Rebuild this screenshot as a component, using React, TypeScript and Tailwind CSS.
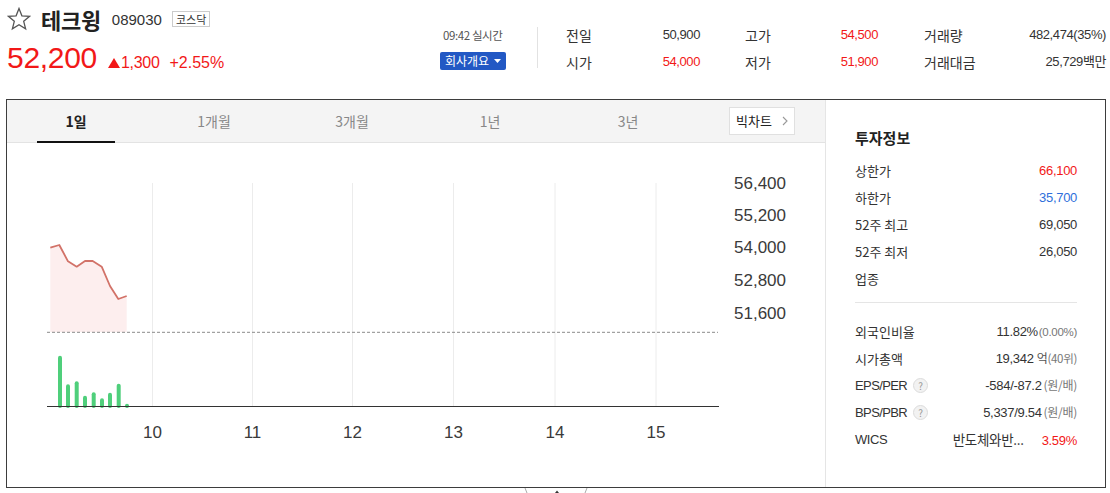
import React from "react";

const F = "font-['Liberation_Sans','Noto_Sans_CJK_KR',sans-serif]";
const K = "font-['Noto_Sans_CJK_KR','Liberation_Sans',sans-serif]";

function Star() {
  return (
    <svg width="24" height="24" viewBox="0 0 24 24">
      <polygon
        points="12,1.5 14.9,8.8 22.6,9.3 16.7,14.3 18.6,21.9 12,17.7 5.4,21.9 7.3,14.3 1.4,9.3 9.1,8.8"
        fill="none"
        stroke="#555"
        strokeWidth="1.3"
        strokeLinejoin="miter"
      />
    </svg>
  );
}

function Help() {
  return (
    <span className="ml-[6px] inline-flex h-[15px] w-[15px] items-center justify-center rounded-full border border-[#dcdcdc] bg-[#f2f2f2] text-[10px] leading-none text-[#999]">
      ?
    </span>
  );
}

function Chart() {
  const price: [number, number][] = [
    [43.3, 104.7],
    [52.3, 102],
    [61, 118.3],
    [69.7, 123.7],
    [78, 118],
    [85.7, 118],
    [94.7, 123.7],
    [103, 143],
    [111.3, 156],
    [119.7, 153],
  ];
  const line = price.map((p, i) => `${i ? "L" : "M"}${p[0]},${p[1]}`).join(" ");
  const area = `${line} L119.7,189 L43.3,189 Z`;
  const bars: [number, number][] = [
    [53, 212.7],
    [61, 241.3],
    [69.7, 238.3],
    [78, 252.7],
    [86.7, 249.3],
    [95, 255.3],
    [103, 249.7],
    [111.7, 240.7],
    [120, 260.7],
  ];
  const grid = [145.5, 245.5, 345.5, 446.5, 548, 649];
  const xl = ["10", "11", "12", "13", "14", "15"];
  const yl: [string, number][] = [
    ["56,400", 40.3],
    ["55,200", 72],
    ["54,000", 104.7],
    ["52,800", 137],
    ["51,600", 170.3],
  ];
  return (
    <svg width="818" height="344" viewBox="0 0 818 344" className="block">
      {grid.map((x) => (
        <line key={x} x1={x} y1={40} x2={x} y2={263} stroke="#ececec" strokeWidth="1" />
      ))}
      <path d={area} fill="#fdeeee" />
      <path d={line} fill="none" stroke="#d27268" strokeWidth="1.8" strokeLinejoin="round" />
      <line x1={40} y1={189.3} x2={711} y2={189.3} stroke="#8a8a8a" strokeWidth="1" strokeDasharray="3 2" />
      {bars.map(([x, t]) => (
        <rect key={x} x={x - 2} y={t} width={4} height={263 - t + 2} rx={2} fill="#4fcf7b" />
      ))}
      <line x1={40} y1={263.5} x2={712} y2={263.5} stroke="#333" strokeWidth="1.2" />
      {yl.map(([t, y]) => (
        <text
          key={t}
          x={727}
          y={y}
          dominantBaseline="central"
          fontSize="17"
          fill="#3a3a3a"
          fontFamily="'Liberation Sans', Arial, sans-serif"
        >
          {t}
        </text>
      ))}
      {grid.map((x, i) => (
        <text
          key={x}
          x={x}
          y={289.7}
          textAnchor="middle"
          dominantBaseline="central"
          fontSize="17"
          fill="#3a3a3a"
          fontFamily="'Liberation Sans', Arial, sans-serif"
        >
          {xl[i]}
        </text>
      ))}
    </svg>
  );
}

function Row({ label, children }: { label: React.ReactNode; children: React.ReactNode }) {
  return (
    <div className="flex h-[27px] items-center justify-between">
      <div className={`flex items-center text-[13px] text-[#333] ${K}`}>{label}</div>
      <div className="flex items-baseline text-[13px] tracking-[-0.3px]">{children}</div>
    </div>
  );
}

export default function App() {
  const tabs = ["1일", "1개월", "3개월", "1년", "3년"];
  return (
    <div className={`relative h-[493px] w-[1110px] overflow-hidden bg-white text-[#222] ${F}`}>
      {/* header */}
      <div className="flex h-[99px]">
        <div className="w-[440px] pl-[7px]">
          <div className="mt-[7px] flex h-[24px] items-center">
            <Star />
            <span className={`ml-[10px] text-[22px] font-bold leading-none tracking-[-0.3px] text-[#222] ${K}`}>테크윙</span>
            <span className="ml-[11px] text-[15px] leading-none text-[#333]">089030</span>
            <span className={`ml-[10px] border border-[#ccc] px-[3px] text-[11px] leading-[14px] text-[#333] ${K}`}>코스닥</span>
          </div>
          <div className="mt-[10px] flex items-baseline text-[#f21818]">
            <span className="text-[30px] leading-[34px] tracking-[-0.3px]">52,200</span>
            <svg className="ml-[11px] mr-[1px]" width="12" height="10" viewBox="0 0 12 10">
              <path d="M6 0 L12 10 L0 10 Z" fill="#f21818" />
            </svg>
            <span className="text-[16px] tracking-[-0.3px]">1,300</span>
            <span className="ml-[10px] text-[16px]">+2.55%</span>
          </div>
        </div>
        <div className="w-[97px] pt-[27px]">
          <div className={`pl-[3px] text-[11.5px] leading-[16px] tracking-[-0.4px] text-[#555] ${K}`}>09:42 실시간</div>
          <div className={`mt-[9px] flex h-[18px] w-[66px] items-center justify-center gap-[5px] rounded-[2px] bg-[#2258c4] text-[12px] text-white ${K}`}>
            <span className="leading-none">회사개요</span>
            <svg width="7" height="4" viewBox="0 0 7 4">
              <path d="M0 0 L7 0 L3.5 4 Z" fill="#fff" />
            </svg>
          </div>
        </div>
        <div className="mt-[27px] h-[41px] border-l border-[#e2e2e2]" />
        <div className="pl-[28px] pt-[25px]">
          {[
            [
              ["전일", "50,900", "text-[#333]"],
              ["고가", "54,500", "text-[#f21818]"],
              ["거래량", "482,474(35%)", "text-[#333]"],
            ],
            [
              ["시가", "54,000", "text-[#f21818]"],
              ["저가", "51,900", "text-[#f21818]"],
              ["거래대금", "25,729백만", "text-[#333]"],
            ],
          ].map((row, ri) => (
            <div key={ri} className={`flex h-[20px] items-center ${ri ? "mt-[7px]" : ""}`}>
              {row.map(([l, v, c], ci) => (
                <div
                  key={l}
                  className={`flex items-center justify-between ${
                    ci === 0 ? "w-[134px]" : ci === 1 ? "ml-[45px] w-[133px]" : "ml-[46px] w-[182px]"
                  }`}
                >
                  <span className={`text-[14px] text-[#333] ${K}`}>{l}</span>
                  <span className={`text-[13px] tracking-[-0.4px] ${c}`}>{v}</span>
                </div>
              ))}
            </div>
          ))}
        </div>
      </div>

      {/* main box */}
      <div className="ml-[6px] flex h-[389px] w-[1100px] border border-[#3d3d3d]">
        <div className="w-[819px] border-r border-[#e5e5e5]">
          <div className="flex h-[43px] items-center border-b border-[#e3e3e3] bg-[#f4f4f4]">
            {tabs.map((t, i) => (
              <div
                key={t}
                className={`relative flex h-full w-[138px] items-center justify-center text-[14px] ${K} ${
                  i === 0 ? "font-bold text-[#222]" : "text-[#888]"
                }`}
              >
                {t}
                {i === 0 && <span className="absolute bottom-[-1px] left-[30px] h-[2px] w-[78px] bg-[#111]" />}
              </div>
            ))}
            <div className={`ml-[32px] flex h-[28px] w-[66px] items-center border border-[#e0e0e0] bg-white pl-[6px] text-[13px] text-[#222] ${K}`}>
              빅차트
              <svg className="ml-[10px]" width="6" height="10" viewBox="0 0 6 10">
                <path d="M1 1 L5 5 L1 9" fill="none" stroke="#999" strokeWidth="1.1" />
              </svg>
            </div>
          </div>
          <Chart />
        </div>
        <div className="flex-1 pl-[29px] pr-[28px] pt-[28px]">
          <div className={`h-[20px] text-[15px] font-bold leading-[20px] text-[#222] ${K}`}>투자정보</div>
          <div className="mt-[9px]">
            <Row label="상한가">
              <span className="text-[#f21818]">66,100</span>
            </Row>
            <Row label="하한가">
              <span className="text-[#2f6fdb]">35,700</span>
            </Row>
            <Row label="52주 최고">
              <span className="text-[#333]">69,050</span>
            </Row>
            <Row label="52주 최저">
              <span className="text-[#333]">26,050</span>
            </Row>
            <Row label="업종">
              <span />
            </Row>
          </div>
          <div className="mt-[10px] border-t border-[#e5e5e5]" />
          <div className="mt-[15px]">
            <Row label="외국인비율">
              <span className="text-[#333]">11.82%</span>
              <span className="ml-[1px] text-[11.5px] text-[#777]">(0.00%)</span>
            </Row>
            <Row label="시가총액">
              <span className="text-[#333]">19,342</span>
              <span className={`ml-[3px] text-[12px] text-[#555] ${K}`}>억</span>
              <span className={`text-[11.5px] text-[#777] ${K}`}>(40위)</span>
            </Row>
            <Row
              label={
                <>
                  <span className={`${F} tracking-[-0.6px]`}>EPS/PER</span>
                  <Help />
                </>
              }
            >
              <span className="text-[#333]">-584/-87.2</span>
              <span className={`ml-[2px] text-[12px] text-[#777] ${K}`}>(원/배)</span>
            </Row>
            <Row
              label={
                <>
                  <span className={`${F} tracking-[-0.6px]`}>BPS/PBR</span>
                  <Help />
                </>
              }
            >
              <span className="text-[#333]">5,337/9.54</span>
              <span className={`ml-[2px] text-[12px] text-[#777] ${K}`}>(원/배)</span>
            </Row>
            <Row label={<span className={`${F} tracking-[-0.4px]`}>WICS</span>}>
              <span className={`text-[13.5px] text-[#333] ${K}`}>반도체와반...</span>
              <span className="ml-[18px] text-[#f21818]">3.59%</span>
            </Row>
          </div>
        </div>
      </div>

      {/* fold tab */}
      <svg className="absolute left-[522px] top-[488px]" width="68" height="5" viewBox="0 0 68 5">
        <path d="M3 0 L5 5" stroke="#aaa" strokeWidth="1" />
        <path d="M65 0 L63 5" stroke="#aaa" strokeWidth="1" />
        <path d="M33 5 L35 2.5 L37 5 Z" fill="#333" />
      </svg>
    </div>
  );
}
